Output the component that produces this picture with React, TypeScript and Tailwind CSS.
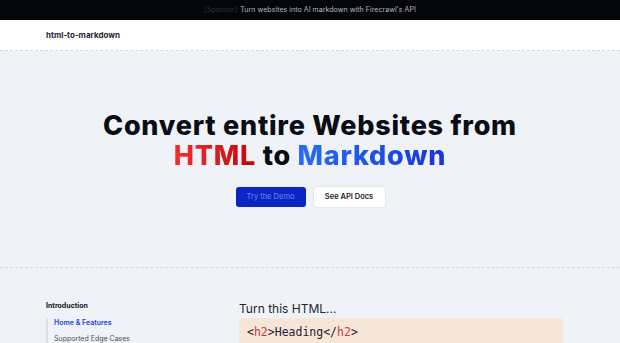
import React from 'react';

export default function App() {
  return (
    <div className="min-h-screen bg-[#eff2f7] font-['Inter',sans-serif] text-[#111827]">
      {/* Sponsor bar */}
      <div className="h-[20px] bg-[#05050c] flex items-center justify-center text-[7px] tracking-[0.05px]">
        <span className="text-[#2e3350]">[Sponsor]</span>
        <span className="ml-[3px] text-[#b4b8c4]">Turn websites into AI markdown with Firecrawl's API</span>
      </div>

      {/* Nav */}
      <header className="h-[31px] bg-white border-b border-dashed border-[#d4d8df] flex items-center px-[46px]">
        <span className="text-[8px] font-bold text-[#1f2430]">html-to-markdown</span>
      </header>

      {/* Hero */}
      <section className="border-b border-dashed border-[#d4d8df] pt-[60px] pb-[60px] flex flex-col items-center">
        <h1 className="text-center text-[27px] leading-[30px] font-extrabold tracking-[0.75px] text-[#0b0d14]">
          Convert entire Websites from
          <br />
          <span className="bg-gradient-to-r from-[#f03030] to-[#c4000a] bg-clip-text text-transparent">HTML</span>
          {' to '}
          <span className="bg-gradient-to-r from-[#2a6cf6] to-[#1a34d6] bg-clip-text text-transparent">Markdown</span>
        </h1>
        <div className="mt-[16px] flex gap-[8px]">
          <button className="h-[20px] w-[70px] rounded-[3px] bg-[#0b25c4] text-[7.5px] text-[#6f86f0]">
            Try the Demo
          </button>
          <button className="h-[20px] w-[71px] rounded-[3px] bg-white text-[7.5px] font-semibold text-[#1a1d26] shadow-[0_0_0_1px_#e5e7eb]">
            See API Docs
          </button>
        </div>
      </section>

      {/* Docs */}
      <section className="flex pt-[33px] pl-[46px]">
        <aside className="w-[193px] shrink-0">
          <div className="text-[7px] leading-[9px] font-bold text-[#111318]">Introduction</div>
          <div className="mt-[8px] border-l-2 border-[#dcdfe5] pl-[6px] flex flex-col gap-[7px] text-[7px] leading-[9px]">
            <span className="font-semibold text-[#1f3fe0]">Home &amp; Features</span>
            <span className="text-[#4b5160]">Supported Edge Cases</span>
          </div>
        </aside>
        <div className="w-[324px]">
          <div className="text-[12px] leading-[15px] text-[#232733]">Turn this HTML...</div>
          <div className="mt-[2px] rounded-[4px] bg-[#f5e6d7] px-[8px] pt-[6px] pb-[10px] font-['DejaVu_Sans_Mono',monospace] text-[11.5px] text-[#1f2336]">
            &lt;<span className="text-[#d23c3c]">h2</span>&gt;Heading&lt;/<span className="text-[#d23c3c]">h2</span>&gt;
          </div>
        </div>
      </section>
    </div>
  );
}
